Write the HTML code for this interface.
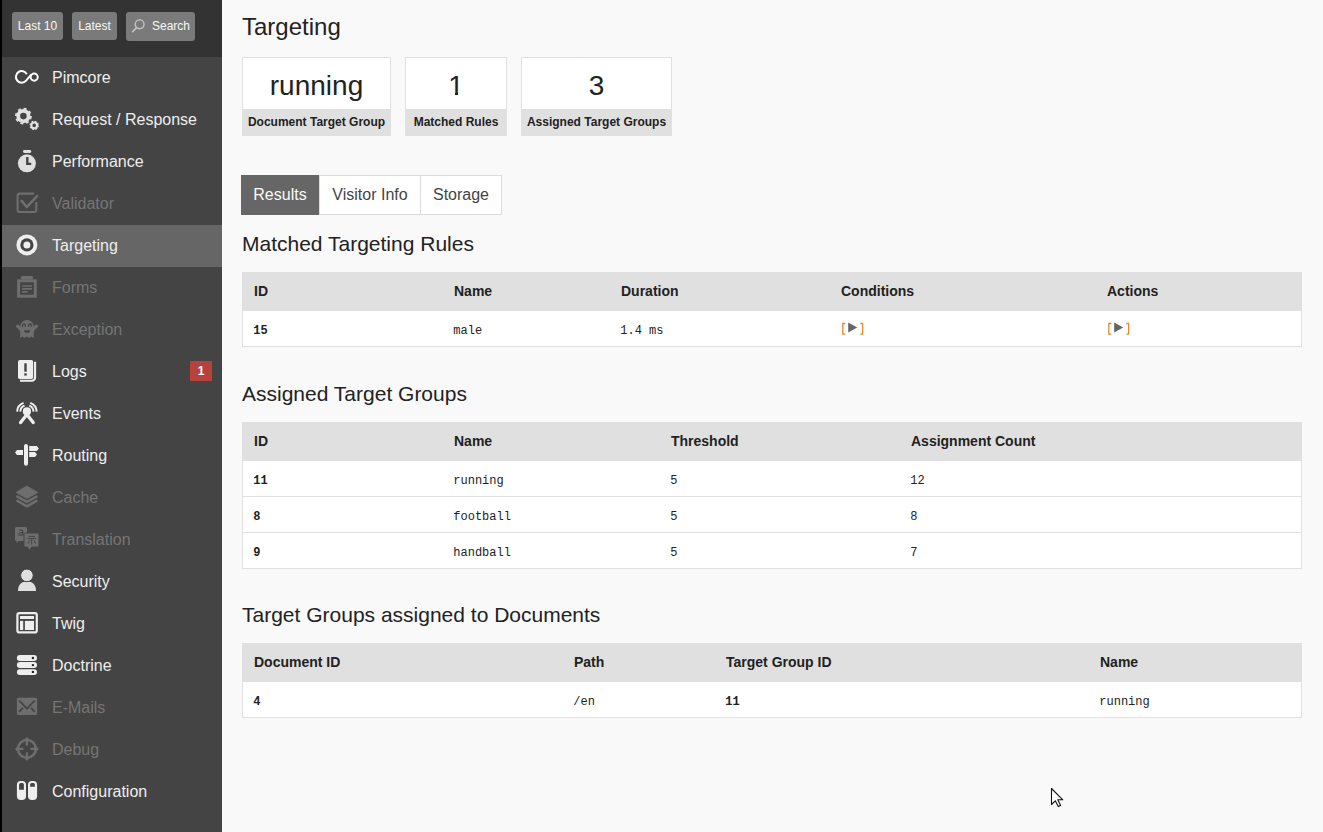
<!DOCTYPE html>
<html><head><meta charset="utf-8">
<style>
*{box-sizing:border-box;margin:0;padding:0}
html,body{width:1323px;height:832px;overflow:hidden}
body{background:#F9F9F9;color:#222;font:14px/1.4 "Liberation Sans",sans-serif;position:relative}
#edge{position:absolute;left:0;top:0;width:2px;height:832px;background:#000}
#sidebar{position:absolute;left:2px;top:0;width:220px;height:832px;background:#444}
#shortcuts{position:absolute;left:0;top:0;width:220px;height:57px;background:#333}
.btn{position:absolute;top:12px;height:28px;background:#7a7a7a;border-radius:3px;color:#F8F8F8;font-size:12px;line-height:28px;text-align:center;white-space:nowrap}
.item{position:absolute;left:0;width:220px;height:42px}
.item.sel{background:#666}
.item .ic{position:absolute;left:8px;top:3px;width:36px;height:36px}
.item .tx{position:absolute;left:50px;top:0;line-height:42px;font-size:16px;color:#EEE;white-space:nowrap}
.item.dis .tx{color:#757575}
.badge{position:absolute;left:188px;top:10px;width:22px;height:20px;background:#B9413C;color:#fff;font-size:12px;font-weight:bold;text-align:center;line-height:20px}
#content{position:absolute;left:222px;top:0;width:1101px;height:832px}
h2{position:absolute;left:20px;top:12px;font-size:24px;font-weight:normal;line-height:30px;color:#222;white-space:nowrap}
h3{position:absolute;left:20px;font-size:21px;font-weight:normal;line-height:26px;color:#222;white-space:nowrap}
.metric{position:absolute;top:57px;height:79px;background:#fff;border:1px solid #E0E0E0;text-align:center}
.metric .v{display:block;height:51px;font-size:28px;line-height:56px;color:#222}
.metric .l{display:block;height:27px;background:#E0E0E0;font-size:12px;font-weight:bold;line-height:27px;color:#222;white-space:nowrap}
.tabs{position:absolute;left:19px;top:175px;height:40px}
.tab{position:absolute;top:0;height:40px;border:1px solid #DDD;background:#fff;color:#444;font-size:16px;line-height:38px;text-align:center}
.tab.act{background:#666;border-color:#666;color:#FAFAFA}
.tbl{position:absolute;left:20px;width:1060px;background:#fff;border:1px solid #E0E0E0}
.thr{position:absolute;left:0;top:0;width:1058px;height:37px;background:#E0E0E0}
.th{position:absolute;top:8px;font-size:14px;font-weight:bold;line-height:20px;color:#222;white-space:nowrap}
.tr{position:absolute;left:0;width:1058px;height:36px;border-top:1px solid #E0E0E0}
.td{position:absolute;top:10.5px;margin-left:-0.7px;font:12px/18px "Liberation Mono",monospace;color:#222;white-space:nowrap}
.td.b{font-weight:bold}
.tog{display:block;margin-top:0.5px;margin-left:1.7px}
</style></head><body>
<div id="edge"></div>
<div id="sidebar">
  <div id="shortcuts">
    <div class="btn" style="left:10px;width:51px">Last 10</div>
    <div class="btn" style="left:70px;width:45px">Latest</div>
    <div class="btn" style="left:124px;width:69px;height:29px;text-align:left"><svg style="position:absolute;left:5px;top:6px" width="14" height="16" viewBox="0 0 14 16"><circle cx="8.65" cy="6.3" r="4.4" fill="none" stroke="#c4c4c4" stroke-width="1.4"/><path d="M5.6,9.6 L1.5,13.8" stroke="#c4c4c4" stroke-width="1.6" stroke-linecap="round"/></svg><span style="position:absolute;left:26px;top:0">Search</span></div>
  </div>
  <div class="item" style="top:57px"><svg class="ic" viewBox="0 0 36 36"><path d="M16.82,14.18 A5.8,5.8 0 1 0 16.08,20.7 L21.5,14.4" fill="none" stroke="#fff" stroke-width="2.0"/><circle cx="24.2" cy="17.1" r="3.55" fill="none" stroke="#fff" stroke-width="1.95"/></svg><div class="tx">Pimcore</div></div>
  <div class="item" style="top:99px"><svg class="ic" viewBox="0 0 36 36"><circle cx="13.4" cy="14.1" r="5.2" fill="none" stroke="#e0e0e0" stroke-width="3.8"/><circle cx="13.4" cy="14.1" r="7.5" fill="none" stroke="#e0e0e0" stroke-width="1.8" stroke-dasharray="3 2.89"/><circle cx="24.2" cy="23.4" r="2.85" fill="none" stroke="#e0e0e0" stroke-width="2.1"/><circle cx="24.2" cy="23.4" r="4.1" fill="none" stroke="#e0e0e0" stroke-width="1.3" stroke-dasharray="1.7 1.52"/></svg><div class="tx">Request / Response</div></div>
  <div class="item" style="top:141px"><svg class="ic" viewBox="0 0 36 36"><rect x="13" y="6.1" width="8.2" height="2.8" rx="1.3" fill="#e0e0e0"/><circle cx="16.9" cy="19.3" r="9" fill="#e0e0e0"/><path d="M17.3,13 V19.9 H21.2" fill="none" stroke="#444" stroke-width="2.4"/></svg><div class="tx">Performance</div></div>
  <div class="item dis" style="top:183px"><svg class="ic" viewBox="0 0 36 36"><path d="M24,7.6 H9.6 a2,2 0 0 0 -2,2 V24 a2,2 0 0 0 2,2 H24.3 a2,2 0 0 0 2,-2 V16" fill="none" stroke="#6e6e6e" stroke-width="2.1"/><path d="M11.6,14.8 L16.7,21 L27.1,10.2" fill="none" stroke="#6e6e6e" stroke-width="2.6" stroke-linecap="round" stroke-linejoin="round"/></svg><div class="tx">Validator</div></div>
  <div class="item sel" style="top:225px"><svg class="ic" viewBox="0 0 36 36"><circle cx="16.9" cy="16.9" r="10.5" fill="#eee"/><circle cx="16.9" cy="16.9" r="6.6" fill="#444"/><circle cx="16.9" cy="16.9" r="3.5" fill="#eee"/></svg><div class="tx">Targeting</div></div>
  <div class="item dis" style="top:267px"><svg class="ic" viewBox="0 0 36 36"><rect x="8.6" y="10.8" width="16.7" height="15.4" fill="none" stroke="#6e6e6e" stroke-width="3"/><rect x="11" y="6" width="12" height="3.6" rx="1.3" fill="#6e6e6e"/><path d="M12.1,16 H21.9 M12.1,18.9 H21.9 M12.1,21.9 H17.7" stroke="#6e6e6e" stroke-width="1.7"/></svg><div class="tx">Forms</div></div>
  <div class="item dis" style="top:309px"><svg class="ic" viewBox="0 0 36 36"><path d="M10.2,26 V14.5 a6.8,6.5 0 0 1 13.6,0 V26 l-2.3,-1.6 -2.3,1.6 -2.3,-1.6 -2.3,1.6 -2.2,-1.6 Z" fill="#6e6e6e"/><path d="M11,17.6 L7.6,14.2 M23,17.6 L26.4,14.2" stroke="#6e6e6e" stroke-width="3.2" stroke-linecap="round"/><path d="M12.6,14.8 V13.2 a1.35,1.35 0 0 1 2.7,0 V14.8 M18.6,14.8 V13.2 a1.35,1.35 0 0 1 2.7,0 V14.8" fill="none" stroke="#444" stroke-width="1.3"/><path d="M14.1,18.2 h6 a3,2.6 0 0 1 -6,0 Z" fill="#444"/></svg><div class="tx">Exception</div></div>
  <div class="item" style="top:351px"><svg class="ic" viewBox="0 0 36 36"><rect x="8" y="6.1" width="15.2" height="19" rx="1.8" fill="#eee"/><rect x="14.3" y="9.3" width="2.4" height="8.4" fill="#444"/><rect x="14.3" y="19.3" width="2.4" height="2.3" fill="#444"/><path d="M25.1,7.8 V23.6 a3.2,3.2 0 0 1 -3.2,3.2 H10" fill="none" stroke="#eee" stroke-width="2.1"/></svg><div class="tx">Logs</div><div class="badge">1</div></div>
  <div class="item" style="top:393px"><svg class="ic" viewBox="0 0 36 36"><circle cx="16.9" cy="15.4" r="4.1" fill="#eee"/><path d="M16.9,18.5 L10.6,26.6 M16.9,18.5 L23.2,26.6" stroke="#eee" stroke-width="3.3" stroke-linecap="round"/><path d="M10.3,15.6 A6.6,6.6 0 0 1 14.6,9.6 M23.5,15.6 A6.6,6.6 0 0 0 19.2,9.6 M7.1,15.6 A9.8,9.8 0 0 1 13.6,6.9 M26.7,15.6 A9.8,9.8 0 0 0 20.2,6.9" fill="none" stroke="#eee" stroke-width="2"/></svg><div class="tx">Events</div></div>
  <div class="item" style="top:435px"><svg class="ic" viewBox="0 0 36 36"><rect x="14" y="6" width="4" height="21.8" rx="2" fill="#eee"/><path d="M13,12.1 H7 L5,14.5 L7,16.9 H13 Z M19.2,8 H26.8 L28.8,10.5 L26.8,13 H19.2 Z M19.2,14.1 H25 L27,16.5 L25,18.9 H19.2 Z" fill="#eee"/></svg><div class="tx">Routing</div></div>
  <div class="item dis" style="top:477px"><svg class="ic" viewBox="0 0 36 36"><path d="M6.1,12.4 L16.9,6.1 L27.7,12.4 L16.9,18.6 Z" fill="#6e6e6e" stroke="#6e6e6e" stroke-width="0.8" stroke-linejoin="round"/><path d="M7.4,16.6 L16.9,21.9 L26.4,16.6 M7.4,20.9 L16.9,26.3 L26.4,20.9" fill="none" stroke="#6e6e6e" stroke-width="2.6" stroke-linejoin="round" stroke-linecap="round"/></svg><div class="tx">Cache</div></div>
  <div class="item dis" style="top:519px"><svg class="ic" viewBox="0 0 36 36"><path d="M6.5,5 H15.5 a1.5,1.5 0 0 1 1.5,1.5 V17.5 a1.5,1.5 0 0 1 -1.5,1.5 H9 L6.5,21 V19 a1.5,1.5 0 0 1 -1.5,-1.5 V6.5 a1.5,1.5 0 0 1 1.5,-1.5 Z" fill="#6e6e6e"/><path d="M9.2,8.4 a2.2,1.9 0 0 1 3.7,1.3 V13.4 M12.9,10.9 C11,10.2 8.6,10.6 8.6,12.1 C8.6,13.7 11.6,13.7 12.9,12.1" fill="none" stroke="#444" stroke-width="1.1"/><path d="M15.6,11 H27.4 a1.6,1.6 0 0 1 1.6,1.6 V23.5 a1.6,1.6 0 0 1 -1.6,1.6 H21.8 L19,28.8 L17.6,25.1 H15.6 a1.6,1.6 0 0 1 -1.6,-1.6 V12.6 a1.6,1.6 0 0 1 1.6,-1.6 Z" fill="#6e6e6e" stroke="#444" stroke-width="1"/><path d="M18.5,14.4 H25 M17.3,16.6 H26.2 M21.7,16.6 V22.5 M19.4,18.5 L17.8,21.5 M24,18.5 L25.6,21.5" fill="none" stroke="#444" stroke-width="1"/></svg><div class="tx">Translation</div></div>
  <div class="item" style="top:561px"><svg class="ic" viewBox="0 0 36 36"><path d="M8,27 C8,20.5 11.5,17.4 17,17.4 C22.5,17.4 26,20.5 26,27 Z" fill="#e0e0e0"/><circle cx="16.9" cy="11.4" r="6.3" fill="#e0e0e0" stroke="#444" stroke-width="1"/></svg><div class="tx">Security</div></div>
  <div class="item" style="top:603px"><svg class="ic" viewBox="0 0 36 36"><rect x="7.4" y="7.2" width="19.4" height="19.2" rx="2" fill="none" stroke="#eee" stroke-width="2.2"/><rect x="10" y="10" width="14" height="3" fill="#eee"/><rect x="10" y="14.9" width="3.2" height="9.1" fill="#eee"/><rect x="14.9" y="14.9" width="9.1" height="9.1" fill="#eee"/></svg><div class="tx">Twig</div></div>
  <div class="item" style="top:645px"><svg class="ic" viewBox="0 0 36 36"><rect x="6.9" y="6.9" width="20.1" height="6.1" rx="3" fill="#eee"/><rect x="6.9" y="14.1" width="20.1" height="6" rx="3" fill="#eee"/><rect x="6.9" y="21.2" width="20.1" height="5.8" rx="2.9" fill="#eee"/><circle cx="22.9" cy="10" r="1.2" fill="#222"/><circle cx="22.9" cy="17.1" r="1.2" fill="#222"/><circle cx="22.9" cy="23.9" r="1.2" fill="#222"/></svg><div class="tx">Doctrine</div></div>
  <div class="item dis" style="top:687px"><svg class="ic" viewBox="0 0 36 36"><rect x="6.9" y="7.8" width="20.2" height="17.3" rx="1.5" fill="#6e6e6e"/><path d="M9.2,10.5 L16.9,18.7 L24.8,10.5 M9.2,21.8 L12.9,17.9 M24.8,21.8 L21.1,17.9" fill="none" stroke="#444" stroke-width="1.8"/></svg><div class="tx">E-Mails</div></div>
  <div class="item dis" style="top:729px"><svg class="ic" viewBox="0 0 36 36"><circle cx="16.9" cy="16.9" r="8.9" fill="none" stroke="#6e6e6e" stroke-width="2.6"/><path d="M16.9,8 V13.4 M16.9,20.4 V25.8 M8,16.9 H13.4 M20.4,16.9 H25.8" stroke="#6e6e6e" stroke-width="2.3"/><path d="M14.4,7.2 L16.9,5 L19.4,7.2 Z M14.4,26.6 L16.9,28.8 L19.4,26.6 Z M7.2,14.4 L5,16.9 L7.2,19.4 Z M26.6,14.4 L28.8,16.9 L26.6,19.4 Z" fill="#6e6e6e"/></svg><div class="tx">Debug</div></div>
  <div class="item" style="top:771px"><svg class="ic" viewBox="0 0 36 36"><rect x="6.9" y="6.9" width="9.1" height="19.1" rx="4" fill="#eee"/><rect x="18" y="6.9" width="9.1" height="19.1" rx="4" fill="#eee"/><path d="M9.1,15.8 V10.6 a1.5,1.5 0 0 1 1.5,-1.5 H12.4 a1.5,1.5 0 0 1 1.5,1.5 V15.8 Z M20.1,12.8 V10.6 a1.5,1.5 0 0 1 1.5,-1.5 H23.4 a1.5,1.5 0 0 1 1.5,1.5 V12.8 Z" fill="#444"/></svg><div class="tx">Configuration</div></div>
</div>
<div id="content">
  <h2>Targeting</h2>
  <div class="metric" style="left:20px;width:149px"><span class="v">running</span><span class="l">Document Target Group</span></div>
  <div class="metric" style="left:183px;width:102px"><span class="v">1</span><span class="l">Matched Rules</span></div>
  <div class="metric" style="left:299px;width:151px"><span class="v">3</span><span class="l">Assigned Target Groups</span></div>
  <div class="tabs">
    <div class="tab act" style="left:0;width:78px">Results</div>
    <div class="tab" style="left:78px;width:102px">Visitor Info</div>
    <div class="tab" style="left:179px;width:82px">Storage</div>
  </div>
  <h3 style="top:231px">Matched Targeting Rules</h3>
  <div class="tbl" style="top:272px;height:75px">
    <div class="thr"><span class="th" style="left:11px">ID</span><span class="th" style="left:211px">Name</span><span class="th" style="left:378px">Duration</span><span class="th" style="left:598px">Conditions</span><span class="th" style="left:864px">Actions</span></div>
    <div class="tr" style="top:37px"><span class="td b" style="left:11px">15</span><span class="td" style="left:211px">male</span><span class="td" style="left:378px">1.4 ms</span><span class="td" style="left:598px"><svg class="tog" width="22" height="14" viewBox="0 -1 22 14"><path d="M3.3,0.5 H0.8 V11.2 H3.3" fill="none" stroke="#E0892E" stroke-width="1.3"/><path d="M18.3,0.5 H20.6 V11.2 H18.3" fill="none" stroke="#E0892E" stroke-width="1.3"/><path d="M6.2,-0.6 L15.2,4.45 L6.2,9.5 Z" fill="#666"/></svg></span><span class="td" style="left:864px"><svg class="tog" width="22" height="14" viewBox="0 -1 22 14"><path d="M3.3,0.5 H0.8 V11.2 H3.3" fill="none" stroke="#E0892E" stroke-width="1.3"/><path d="M18.3,0.5 H20.6 V11.2 H18.3" fill="none" stroke="#E0892E" stroke-width="1.3"/><path d="M6.2,-0.6 L15.2,4.45 L6.2,9.5 Z" fill="#666"/></svg></span></div>
  </div>
  <h3 style="top:381px">Assigned Target Groups</h3>
  <div class="tbl" style="top:422px;height:147px">
    <div class="thr"><span class="th" style="left:11px">ID</span><span class="th" style="left:211px">Name</span><span class="th" style="left:428px">Threshold</span><span class="th" style="left:668px">Assignment Count</span></div>
    <div class="tr" style="top:37px"><span class="td b" style="left:11px">11</span><span class="td" style="left:211px">running</span><span class="td" style="left:428px">5</span><span class="td" style="left:668px">12</span></div>
    <div class="tr" style="top:73px"><span class="td b" style="left:11px">8</span><span class="td" style="left:211px">football</span><span class="td" style="left:428px">5</span><span class="td" style="left:668px">8</span></div>
    <div class="tr" style="top:109px"><span class="td b" style="left:11px">9</span><span class="td" style="left:211px">handball</span><span class="td" style="left:428px">5</span><span class="td" style="left:668px">7</span></div>
  </div>
  <h3 style="top:602px">Target Groups assigned to Documents</h3>
  <div class="tbl" style="top:643px;height:75px">
    <div class="thr"><span class="th" style="left:11px">Document ID</span><span class="th" style="left:331px">Path</span><span class="th" style="left:483px">Target Group ID</span><span class="th" style="left:857px">Name</span></div>
    <div class="tr" style="top:37px"><span class="td b" style="left:11px">4</span><span class="td" style="left:331px">/en</span><span class="td b" style="left:483px">11</span><span class="td" style="left:857px">running</span></div>
  </div>
</div>
<div style="position:absolute;left:449px;top:93px;width:6px;height:2px;background:#fff"></div><div style="position:absolute;left:458px;top:93px;width:6px;height:2px;background:#fff"></div>
<svg style="position:absolute;left:1050px;top:787px" width="14" height="21" viewBox="0 0 14 21"><path d="M1.5,1.5 V17.5 L5.3,13.8 L8.3,19.6 L10.6,18.5 L7.8,12.8 H12.8 Z" fill="#fff" stroke="#111" stroke-width="1.1" stroke-linejoin="round"/></svg>
</body></html>
